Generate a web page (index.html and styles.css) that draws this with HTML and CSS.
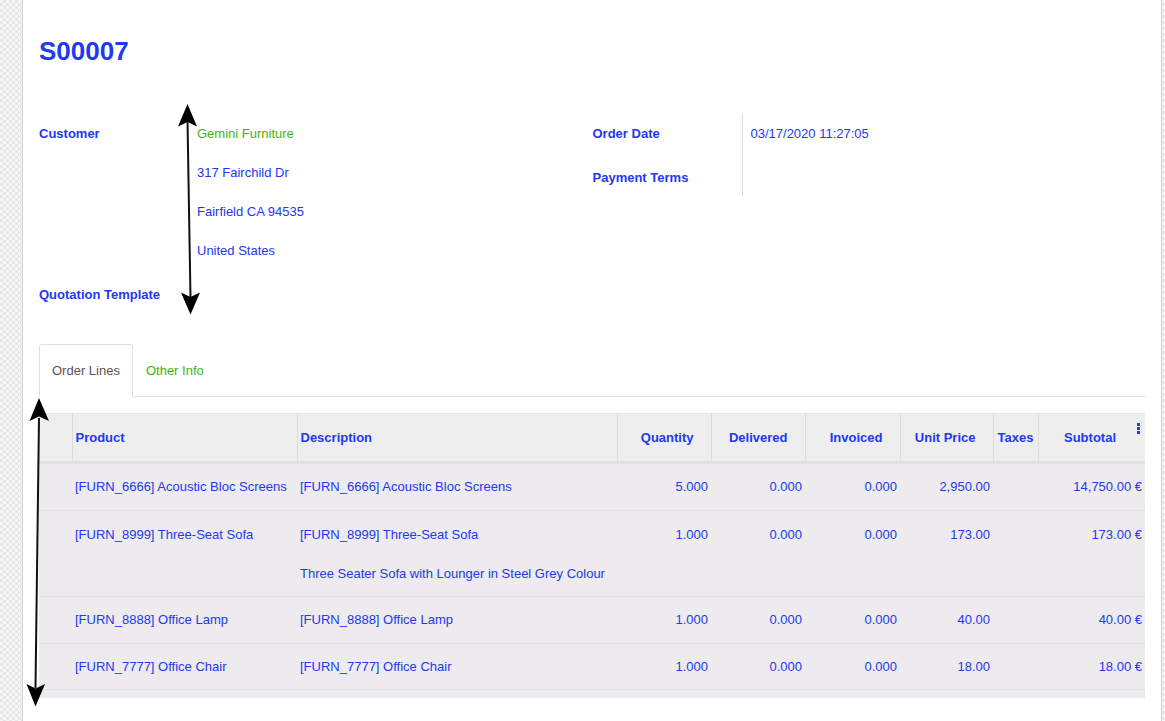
FILE: index.html
```html
<!DOCTYPE html>
<html>
<head>
<meta charset="utf-8">
<title>S00007</title>
<link rel="stylesheet" href="styles.css">
</head>
<body>
<div class="page">
  <div class="gutter gutter-left"></div>
  <main class="sheet">
    <h1 class="title">S00007</h1>
    <div class="groups">
      <div class="group group-left">
        <div class="lbl lbl-first">Customer</div>
        <div class="addr">
          <span class="green">Gemini Furniture</span>
          <span>317 Fairchild Dr</span>
          <span>Fairfield CA 94535</span>
          <span>United States</span>
        </div>
        <div class="lbl lbl-qt">Quotation Template</div>
        <div class="val-qt"></div>
      </div>
      <div class="group group-right">
        <div class="lbl lbl-r">Order Date</div>
        <div class="rvals"><span class="val">03/17/2020 11:27:05</span></div>
        <div class="lbl lbl-r">Payment Terms</div>
      </div>
    </div>

    <div class="notebook">
      <ul class="tabs">
        <li class="tab active">Order Lines</li>
        <li class="tab green">Other Info</li>
      </ul>
    </div>

    <table class="lines">
      <colgroup>
        <col style="width:33px">
        <col style="width:225px">
        <col style="width:320px">
        <col style="width:94px">
        <col style="width:94px">
        <col style="width:95px">
        <col style="width:93px">
        <col style="width:45px">
        <col style="width:107px">
      </colgroup>
      <thead>
        <tr>
          <th class="first"></th>
          <th>Product</th>
          <th>Description</th>
          <th class="num">Quantity</th>
          <th class="num">Delivered</th>
          <th class="num">Invoiced</th>
          <th class="num">Unit Price</th>
          <th class="taxes">Taxes</th>
          <th class="num subtotal">Subtotal<span class="dots"><i></i><i></i><i></i></span></th>
        </tr>
      </thead>
      <tbody>
        <tr>
          <td></td>
          <td>[FURN_6666] Acoustic Bloc Screens</td>
          <td>[FURN_6666] Acoustic Bloc Screens</td>
          <td class="num">5.000</td>
          <td class="num">0.000</td>
          <td class="num">0.000</td>
          <td class="num">2,950.00</td>
          <td></td>
          <td class="num">14,750.00 €</td>
        </tr>
        <tr class="tall">
          <td></td>
          <td>[FURN_8999] Three-Seat Sofa</td>
          <td class="desc">[FURN_8999] Three-Seat Sofa<br><br>Three Seater Sofa with Lounger in Steel Grey Colour</td>
          <td class="num">1.000</td>
          <td class="num">0.000</td>
          <td class="num">0.000</td>
          <td class="num">173.00</td>
          <td></td>
          <td class="num">173.00 €</td>
        </tr>
        <tr>
          <td></td>
          <td>[FURN_8888] Office Lamp</td>
          <td>[FURN_8888] Office Lamp</td>
          <td class="num">1.000</td>
          <td class="num">0.000</td>
          <td class="num">0.000</td>
          <td class="num">40.00</td>
          <td></td>
          <td class="num">40.00 €</td>
        </tr>
        <tr>
          <td></td>
          <td>[FURN_7777] Office Chair</td>
          <td>[FURN_7777] Office Chair</td>
          <td class="num">1.000</td>
          <td class="num">0.000</td>
          <td class="num">0.000</td>
          <td class="num">18.00</td>
          <td></td>
          <td class="num">18.00 €</td>
        </tr>
      </tbody>
      <tfoot>
        <tr><td colspan="9" class="foot"></td></tr>
      </tfoot>
    </table>
  </main>
  <div class="gutter gutter-right"></div>

  <svg class="arrows" width="1165" height="721" viewBox="0 0 1165 721" aria-hidden="true">
    <line x1="187.5" y1="120" x2="190.5" y2="298" stroke="#111" stroke-width="2"/>
    <polygon points="187.5,104 178,126.5 187.6,122 197,126.5" fill="#000"/>
    <polygon points="190.5,314.5 181,292.5 190.4,297 200,292.5" fill="#000"/>
    <line x1="39" y1="418" x2="35.5" y2="688" stroke="#111" stroke-width="2"/>
    <polygon points="39,398 29.5,421 39,416.5 49,421" fill="#000"/>
    <polygon points="35.5,706.5 26.5,684 35.6,688.5 45,684" fill="#000"/>
  </svg>
</div>
</body>
</html>
```

FILE: styles.css
```css
:root {
  --blue: #2238f2;
  --green: #3cb517;
  --line: #dee2e6;
}

* { box-sizing: border-box; }

html, body {
  margin: 0;
  padding: 0;
  height: 721px;
  overflow: hidden;
}

body {
  font-family: "Liberation Sans", Arial, sans-serif;
  font-size: 13px;
  line-height: 19.5px;
  color: var(--blue);
  background: #fff;
}

.page {
  position: relative;
  display: flex;
  height: 721px;
}

.gutter {
  flex: none;
  background: repeating-conic-gradient(#e6e6e6 0 25%, #f6f6f6 0 50%) 0 0 / 6px 6px;
}

.gutter-left { width: 22px; }
.gutter-right { width: 3px; }

.sheet {
  flex: 1;
  background: #fff;
  border-left: 1px solid #cfcfd4;
  border-right: 1px solid #cfcfd4;
  padding: 36px 15px 0 16px;
  min-width: 0;
}

.title {
  margin: 0;
  font-size: 26px;
  line-height: 30px;
  font-weight: bold;
  color: var(--blue);
}

.groups {
  margin-top: 48px;
  display: grid;
  grid-template-columns: 1fr 1fr;
}

.lbl {
  font-weight: bold;
}

.green { color: var(--green); }

.group-left {
  display: grid;
  grid-template-columns: 158px 1fr;
  align-items: start;
}

.lbl-first { padding-top: 10px; }

.addr {
  padding-top: 10px;
  display: flex;
  flex-direction: column;
  gap: 19.5px;
}

.lbl-qt { padding-top: 24.75px; }

.group-right {
  display: grid;
  grid-template-columns: 149px 1fr;
  grid-template-rows: 44px 38px;
  align-items: start;
}

.lbl-r { padding-top: 10px; }

.rvals {
  grid-column: 2;
  grid-row: 1 / 3;
  align-self: stretch;
  border-left: 1px solid #dcdcdc;
  padding: 10px 0 0 8px;
}

.notebook {
  margin-top: 39px;
}

.tabs {
  list-style: none;
  margin: 0;
  padding: 0;
  display: flex;
  border-bottom: 1px solid var(--line);
}

.tab {
  padding: 16px 12px;
  line-height: 19px;
  border: 1px solid transparent;
  border-radius: 3px 3px 0 0;
  margin-bottom: -1px;
  color: var(--green);
}

.tab.active {
  color: #555;
  background: #fff;
  border-color: var(--line) var(--line) #fff;
}

.lines {
  margin-top: 16px;
  width: 1106px;
  table-layout: fixed;
  border-collapse: collapse;
  border-top: 1px solid #e3e3e3;
}

.lines th {
  position: relative;
  background: #eeeeee;
  font-weight: bold;
  text-align: left;
  padding: 14px 4px 14px 3px;
  border-left: 1px solid #dcdcdc;
  border-bottom: 3px solid var(--line);
  white-space: nowrap;
}

.lines th.first { border-left: 0; }

.lines th.num {
  text-align: right;
  padding-right: 17px;
}

.lines th.taxes { padding: 14px 4px; }

.lines th.subtotal { padding-right: 29px; }

.dots {
  position: absolute;
  top: 9px;
  right: 5px;
  display: flex;
  flex-direction: column;
  gap: 1px;
}

.dots i {
  display: block;
  width: 3px;
  height: 3px;
  background: var(--blue);
}

.lines td {
  background: #edebed;
  padding: 13px 3px;
  border-bottom: 1px solid var(--line);
  white-space: nowrap;
  vertical-align: top;
}

.lines tr.tall td {
  padding-top: 14px;
}

.lines td.num {
  text-align: right;
  padding-right: 3px;
}

.lines td.foot {
  height: 8px;
  padding: 0;
  border-bottom: 0;
}

.arrows {
  position: absolute;
  top: 0;
  left: 0;
  pointer-events: none;
}
```
